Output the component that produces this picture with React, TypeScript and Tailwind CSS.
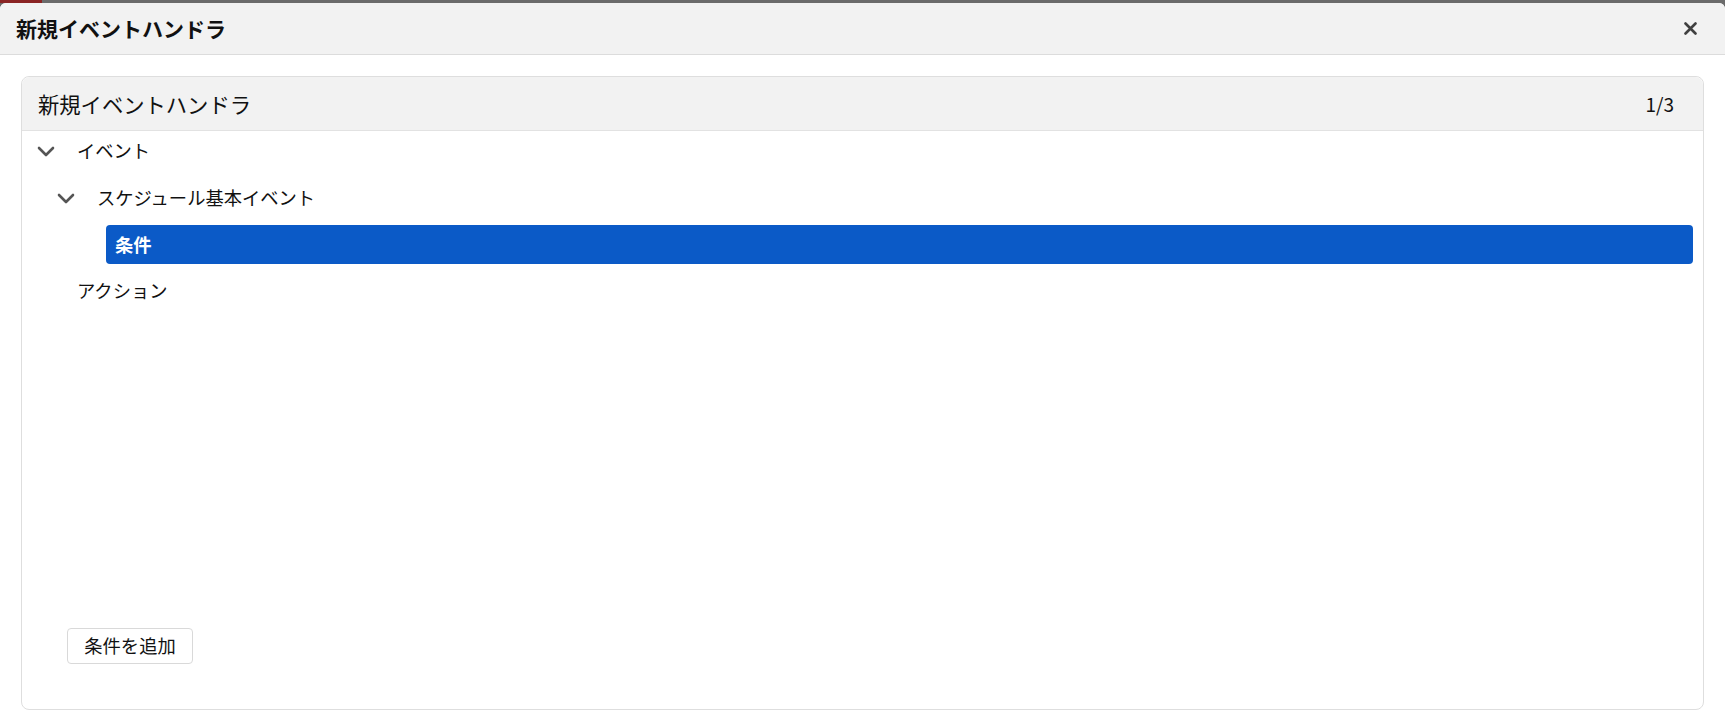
import React from 'react';

const font = { fontFamily: '"Noto Sans CJK JP", "Noto Sans", "Liberation Sans", sans-serif' };

function Chevron() {
  return (
    <svg width="18" height="11" viewBox="0 0 18 11" className="shrink-0">
      <path d="M2 2 L9 9 L16 2" fill="none" stroke="#555555" strokeWidth="2.6" strokeLinecap="round" strokeLinejoin="round" />
    </svg>
  );
}

function CloseIcon() {
  return (
    <svg width="13" height="13" viewBox="0 0 13 13">
      <path d="M1.5 1.5 L11.5 11.5 M11.5 1.5 L1.5 11.5" fill="none" stroke="#404040" strokeWidth="2.6" strokeLinecap="round" />
    </svg>
  );
}

export default function App() {
  return (
    <div className="flex h-[712px] w-full flex-col bg-[#6b6b6b] text-[#111111]" style={font}>
      {/* page behind the dialog */}
      <div className="flex h-[3px] shrink-0">
        <div className="w-[42px] bg-[#8a2424]" />
      </div>

      {/* dialog */}
      <div className="flex flex-1 flex-col rounded-t-[6px] bg-white">
        <div className="flex h-[52px] shrink-0 items-center justify-between rounded-t-[6px] border-b border-[#dcdcdc] bg-[#f2f2f2] pl-[16px] pr-[28px]">
          <span className="text-[21px] font-bold leading-none">新規イベントハンドラ</span>
          <CloseIcon />
        </div>

        <div className="flex flex-1 flex-col px-[21px] pb-[2px] pt-[21px]">
          <div className="flex flex-1 flex-col rounded-[8px] border border-[#dedede]">
            {/* panel header */}
            <div className="flex h-[54px] shrink-0 items-center justify-between rounded-t-[8px] border-b border-[#e2e2e2] bg-[#f2f2f2] pl-[16px] pr-[29px]">
              <span className="text-[21.3px] leading-none">新規イベントハンドラ</span>
              <span className="text-[19px] leading-none">1/3</span>
            </div>

            {/* tree */}
            <div className="flex flex-1 flex-col gap-[7px] pr-[10px] text-[18.3px]">
              <div className="flex h-[40px] items-center pl-[15px]">
                <Chevron />
                <span className="ml-[22px]">イベント</span>
              </div>
              <div className="flex h-[40px] items-center pl-[35px]">
                <Chevron />
                <span className="ml-[22px]">スケジュール基本イベント</span>
              </div>
              <div className="ml-[84px] flex h-[39px] items-center rounded-[4px] bg-[#0b5ac7] pl-[9px] font-bold text-white">
                条件
              </div>
              <div className="flex h-[40px] items-center pl-[55px]">アクション</div>
            </div>

            {/* footer */}
            <div className="pb-[45px] pl-[45px]">
              <button className="h-[36px] w-[126px] rounded-[4px] border border-[#d9d9d9] bg-white text-[18.3px] text-[#111111]">
                条件を追加
              </button>
            </div>
          </div>
        </div>
      </div>
    </div>
  );
}
